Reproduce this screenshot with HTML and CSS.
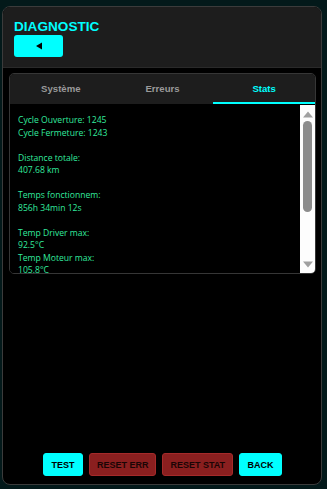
FILE: index.html
```html
<!DOCTYPE html>
<html>
<head>
<meta charset="utf-8">
<link rel="stylesheet" href="styles.css">
</head>
<body>
<div class="panel">
  <div class="header">
    <div class="title">DIAGNOSTIC</div>
    <button class="back-btn"><svg width="8" height="8" viewBox="0 0 8 8"><path d="M1 4 L7 0.5 L7 7.5 Z" fill="#000"/></svg></button>
  </div>
  <div class="body">
    <div class="tabs">
      <div class="tabbar">
        <div class="tab">Système</div>
        <div class="tab">Erreurs</div>
        <div class="tab active">Stats</div>
      </div>
      <div class="content">
        <div class="text">
          <div>Cycle Ouverture: 1245</div>
          <div>Cycle Fermeture: 1243</div>
          <div class="blank">&nbsp;</div>
          <div>Distance totale:</div>
          <div>407.68 km</div>
          <div class="blank">&nbsp;</div>
          <div>Temps fonctionnem:</div>
          <div>856h 34min 12s</div>
          <div class="blank">&nbsp;</div>
          <div>Temp Driver max:</div>
          <div>92.5°C</div>
          <div>Temp Moteur max:</div>
          <div>105.8°C</div>
        </div>
        <div class="scrollbar">
          <svg class="arrow" width="10" height="7" viewBox="0 0 10 7"><path d="M0 6.5 L5 0.5 L10 6.5 Z" fill="#a0a0a0"/></svg>
          <div class="track"><div class="thumb"></div></div>
          <svg class="arrow" width="10" height="7" viewBox="0 0 10 7"><path d="M0 0.5 L10 0.5 L5 6.5 Z" fill="#a0a0a0"/></svg>
        </div>
      </div>
    </div>
    <div class="actions">
      <button class="btn cyan">TEST</button>
      <button class="btn red">RESET ERR</button>
      <button class="btn red">RESET STAT</button>
      <button class="btn cyan">BACK</button>
    </div>
  </div>
</div>
</body>
</html>
```
FILE: styles.css
```css
* { box-sizing: border-box; }
html, body { margin: 0; height: 100%; }
body {
  background: #03191a;
  font-family: "Liberation Sans", Arial, sans-serif;
  padding: 6px 5px 4px 2px;
}
.panel {
  height: 479px;
  width: 320px;
  border: 1px solid #3b3b3b;
  border-radius: 8px;
  background: #000;
  display: flex;
  flex-direction: column;
  overflow: hidden;
}
.header {
  background: #1d1d1d;
  height: 61px;
  padding: 12px 11px 0;
  border-bottom: 1px solid #2a2a2a;
}
.title {
  color: #00ffff;
  font-weight: bold;
  font-size: 13.6px;
  line-height: 16px;
}
.back-btn {
  margin-top: 0;
  width: 49px;
  height: 22px;
  background: #00ffff;
  border: none;
  border-radius: 3px;
  display: flex;
  align-items: center;
  justify-content: center;
  padding: 0;
}
.body {
  flex: 1;
  display: flex;
  flex-direction: column;
  padding: 5px 5px 8px 6px;
}
.tabs {
  height: 201px;
  border: 1px solid #363636;
  border-radius: 5px;
  display: flex;
  flex-direction: column;
  overflow: hidden;
}
.tabbar {
  background: #1d1d1d;
  display: flex;
  height: 30px;
  flex: none;
}
.tab {
  flex: 1;
  text-align: center;
  font-size: 9.6px;
  font-weight: bold;
  color: #9a9a9a;
  line-height: 29px;
  height: 30px;
  border-bottom: 2px solid transparent;
}
.tab.active {
  color: #00ffff;
  border-bottom-color: #00ffff;
}
.content {
  flex: 1;
  display: flex;
  background: #000;
  overflow: hidden;
  border-top: 1px solid #000;
}
.text {
  flex: 1;
  padding: 9px 8px 0;
  font-family: "Open Sans", "Noto Sans", sans-serif;
  font-size: 8.6px;
  line-height: 12.5px;
  color: #32ea9e;
  overflow: hidden;
}
.scrollbar {
  width: 15px;
  background: #fdfdfd;
  display: flex;
  flex-direction: column;
  align-items: center;
  padding: 6px 0 5px;
}
.arrow { flex: none; }
.track {
  flex: 1;
  width: 100%;
  padding: 3px 3px;
}
.thumb {
  width: 9px;
  height: 91px;
  background: #8c8c8c;
  border-radius: 5px;
}
.actions {
  margin-top: auto;
  display: flex;
  justify-content: center;
  gap: 6px;
}
.btn {
  height: 23px;
  border-radius: 3px;
  font-family: "Liberation Sans", Arial, sans-serif;
  font-weight: bold;
  font-size: 9px;
  padding: 0 7.5px;
  border: 1px solid transparent;
}
.cyan { background: #00ffff; color: #000; border-color: #00ffff; }
.red { background: #8a1f1f; color: #1a0505; border-color: #a52a2a; padding: 0 7px; }
```
